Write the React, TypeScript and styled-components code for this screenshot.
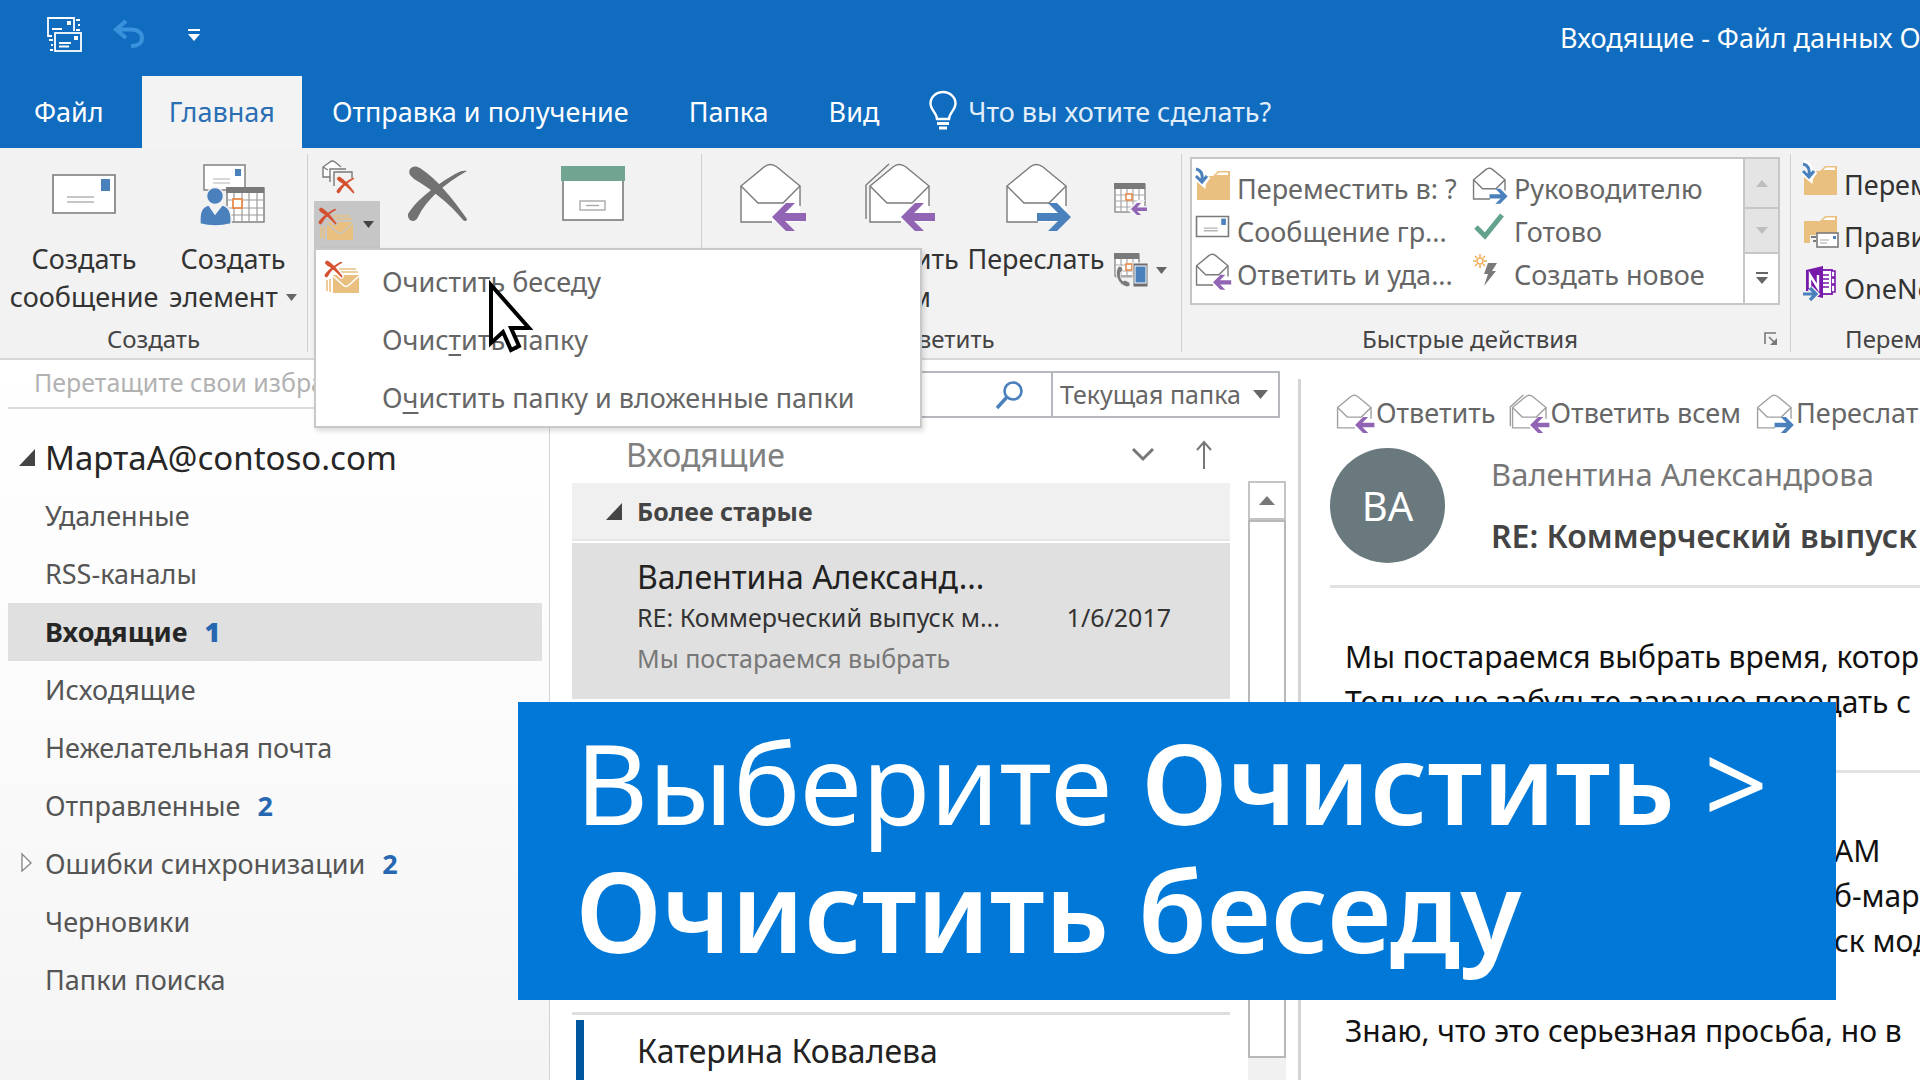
import React from 'react';
import styled, { createGlobalStyle, css } from 'styled-components';

const GlobalStyle = createGlobalStyle`
  * { box-sizing: border-box; }
  body { margin: 0; background: #fff; font-family: "Noto Sans", "Open Sans", sans-serif; font-size: 27px; color: #333; }
  button, input, select { font: inherit; color: inherit; margin: 0; padding: 0; border: 0; background: none; border-radius: 0; outline: none; }
  ul, h1, h2, h3, p { margin: 0; padding: 0; list-style: none; font-weight: 400; font-size: inherit; }
  svg { display: block; flex: none; overflow: visible; }
`;

const GREY = '#7a7a7a';
const BLUE = '#4a80bc';
const PURPLE = '#9164b4';
const SAND = '#e9c07f';
const RED = '#d4502f';

/* ---------- icons ---------- */

const Mail = ({ w = 64, h = 40 }: { w?: number; h?: number }) => (
  <svg width={w} height={h} viewBox="0 0 64 40" preserveAspectRatio="none" aria-hidden="true">
    <rect x="1" y="1" width="62" height="38" fill="#fff" stroke={GREY} strokeWidth="1.6" vectorEffect="non-scaling-stroke" />
    <rect x="49" y="5" width="9" height="12" fill={BLUE} />
    <path d="M15 23H42M15 28H42" stroke="#b4b4b4" strokeWidth="1.4" vectorEffect="non-scaling-stroke" />
  </svg>
);

type EnvelopeProps = { size?: number; arrow: 'left' | 'right'; double?: boolean; soft?: boolean };
const OpenEnvelope = ({ size = 60, arrow, double, soft }: EnvelopeProps) => {
  const line = { stroke: soft ? '#a0a0a0' : GREY, strokeWidth: 1.4, vectorEffect: 'non-scaling-stroke' as const };
  return (
    <svg width={size} height={size} viewBox="0 0 60 60" aria-hidden="true">
      {double && <path d="M-3 55V21L20 0" fill="none" {...line} />}
      <path d="M1 22V58H60V22L37 3Q30 -2 24 3Z" fill="#fff" stroke="none" />
      <path d="M32 58H1V22L24 3Q30 -2 37 3L60 22V42" fill="none" {...line} />
      <path d="M1 22L18 39H43L60 22" fill="none" {...line} />
      {arrow === 'left' ? (
        <path d="M32 53L46 39H55L45 49H66V57H45L55 67H46Z" fill={PURPLE} />
      ) : (
        <path d="M65 53L51 39H42L52 49H31V57H52L42 67H51Z" fill={BLUE} />
      )}
    </svg>
  );
};

const CROSS_A = 'M2 9C-1 2 6 -2 12 2C30 14 44 32 59 53C59 55 57 56 55 54C42 38 22 22 6 13Z';
const CROSS_B = 'M59 5C56 4 52 5 47 8C30 18 9 33 0 48C-1 55 7 58 10 51C18 34 36 18 59 5Z';
const Cross = () => (
  <svg width="59" height="56" viewBox="0 0 59 56" aria-hidden="true">
    <path d={CROSS_A} fill="#727272" />
    <path d={CROSS_B} fill="#727272" />
  </svg>
);

const Archive = () => (
  <svg width="64" height="56" viewBox="0 0 64 56" aria-hidden="true">
    <rect x="2" y="10" width="60" height="44" fill="#fff" stroke={GREY} strokeWidth="1.6" />
    <rect width="64" height="15" fill="#71a592" />
    <rect x="19" y="35" width="25" height="9" fill="#fff" stroke="#a8a8a8" strokeWidth="1.4" />
    <path d="M25 39.500H38" stroke="#a8a8a8" strokeWidth="1.4" />
  </svg>
);

const NewItem = () => (
  <svg width="64" height="60" viewBox="0 0 64 60" aria-hidden="true">
    <rect x="3" y="1" width="41" height="25" fill="#fff" stroke={GREY} strokeWidth="1.4" />
    <rect x="34" y="5" width="6" height="7" fill={BLUE} />
    <path d="M12 15H29M12 19H29" stroke="#b4b4b4" strokeWidth="1.2" />
    <rect x="26" y="24" width="37" height="34" fill="#fff" stroke={GREY} strokeWidth="1.4" />
    <rect x="25" y="23" width="38" height="6" fill={GREY} />
    <path d="M33 29V58M41 29V58M48 29V58M56 29V58M26 36H63M26 44H63M26 51H63" stroke="#9a9a9a" strokeWidth="1.2" />
    <rect x="32" y="35" width="9" height="9" fill="#fff" stroke="#e88b4a" strokeWidth="1.800" />
    <path d="M-1 60C-2 46 2 42 8 41L14 50L21 41C28 42 31 48 30 60Q14 64 -1 60Z" fill={BLUE} stroke="#f2f2f2" strokeWidth="1.500" />
    <ellipse cx="14" cy="32" rx="8.500" ry="8.500" fill={BLUE} stroke="#f2f2f2" strokeWidth="1.500" />
  </svg>
);

const Ignore = () => (
  <svg width="34" height="34" viewBox="0 0 34 34" aria-hidden="true">
    <path d="M8 17H1V7L8 2Q10 0 13 2L19 7M1 7L6 10" fill="#fff" stroke={GREY} strokeWidth="1.4" />
    <path d="M8 22V9H24M12 26V12H30V18" fill="none" stroke={GREY} strokeWidth="1.400" />
    <g transform="translate(15 17) scale(.29)" fill={RED} stroke={RED} strokeWidth="3"><path d={CROSS_A} /><path d={CROSS_B} /></g>
  </svg>
);

const CleanUp = ({ back = '#fff' }: { back?: string }) => (
  <svg width="34" height="33" viewBox="0 0 34 33" aria-hidden="true">
    <path d="M2 19V30M5 18V31M14 8H31M14 11H33" stroke={SAND} strokeWidth="1.600" fill="none" />
    <rect x="8" y="14" width="26" height="18" fill={SAND} />
    <path d="M8 15L18 24Q21 27 24 24L34 15" fill="none" stroke={back} strokeWidth="1.600" />
    <g transform="scale(.29)" fill={back} stroke={back} strokeWidth="12"><path d={CROSS_A} /><path d={CROSS_B} /></g>
    <g transform="scale(.29)" fill={RED} stroke={RED} strokeWidth="3"><path d={CROSS_A} /><path d={CROSS_B} /></g>
  </svg>
);

const Grid = ({ y = 0, w = 30, h = 29 }: { y?: number; w?: number; h?: number }) => (
  <g>
    <rect x="1" y={y + 1} width={w} height={h - 1} fill="#fff" stroke={GREY} strokeWidth="1.2" />
    <rect x="0" y={y} width={w + 1} height="6" fill={GREY} />
    <path d={`M7 ${y + 6}V${y + h}M13 ${y + 6}V${y + h}M19 ${y + 6}V${y + h}M25 ${y + 6}V${y + h}M1 ${y + 12}H${w}M1 ${y + 18}H${w}M1 ${y + 24}H${w}`} stroke="#a8a8a8" strokeWidth="1.2" />
    <rect x="12" y={y + 11} width="6" height="6" fill="#fff" stroke="#e88b4a" strokeWidth="1.600" />
  </g>
);

const Meeting = () => (
  <svg width="34" height="34" viewBox="0 0 34 34" aria-hidden="true">
    <Grid />
    <path d="M15 27L24 18H29L23 24H34V29H23L29 35H24Z" fill="#f2f2f2" stroke="#f2f2f2" strokeWidth="2" />
    <path d="M17 26L23 20H27L23 24.500H33V28H23L27 32H23Z" fill={PURPLE} />
  </svg>
);

const More = () => (
  <svg width="34" height="34" viewBox="0 0 34 34" aria-hidden="true">
    <Grid w={24} h={23} />
    <path d="M5 13C0 18 2 31 13 34C16 34 17 31 15 29L11 27L9 28C6 25 6 22 7 19L9 18L8 14Z" fill={GREY} stroke="#f2f2f2" strokeWidth="1" />
    <rect x="19" y="10" width="15" height="24" fill="#6d6d6d" stroke="#f2f2f2" />
    <rect x="21" y="13" width="11" height="17" fill={BLUE} stroke="#fff" />
  </svg>
);

const MoveFolder = () => (
  <svg width="34" height="32" viewBox="0 0 34 32" aria-hidden="true">
    <path d="M1 8H17L22 3H34V32H1Z" fill={SAND} />
    <path d="M20 7L23 4.500H32V7Z" fill="#fff" />
    <path d="M0 -1C6 1 8 5 7 15L0 9M7 15L12 8" fill="none" stroke="#fff" strokeWidth="6" />
    <path d="M0 1C5 2 7 6 6 13M0 8L6 14L11 8" fill="none" stroke={BLUE} strokeWidth="3" />
  </svg>
);

const Rules = () => (
  <svg width="34" height="32" viewBox="0 0 34 32" aria-hidden="true">
    <path d="M1 6H17L22 1H34V28H1Z" fill={SAND} />
    <path d="M20 5L23 2.500H32V5Z" fill="#fff" />
    <path d="M7 20H14V30H7Z" fill="#f2f2f2" />
    <path d="M8 22H13M10 26H13" stroke={GREY} strokeWidth="2" />
    <rect x="14" y="18" width="21" height="14" fill="#fff" stroke={GREY} strokeWidth="1.600" />
    <rect x="30" y="21" width="3" height="3" fill={BLUE} />
    <path d="M17 25H26M17 28H24" stroke="#a8a8a8" strokeWidth="1.2" />
  </svg>
);

const OneNote = () => (
  <svg width="34" height="34" viewBox="0 0 34 34" aria-hidden="true">
    <rect x="15" y="4" width="14" height="24" fill="#fff" stroke="#7719aa" strokeWidth="1.800" />
    <path d="M29 5H32V11H29M29 12H32V18H29M29 19H32V26H29" fill="#fff" stroke="#7719aa" strokeWidth="1.600" />
    <path d="M20 9H26M20 13H26M20 17H26M20 21H26" stroke="#7719aa" strokeWidth="1.600" />
    <path d="M3 4L20 0V32L3 28Z" fill="#7719aa" />
    <path d="M7 22V9L15 22V9" fill="none" stroke="#fff" strokeWidth="2.400" />
    <path d="M0 28H12M7 22L13 28L7 34" fill="none" stroke="#f2f2f2" strokeWidth="6" />
    <path d="M0 28H12M7 22L13 28L7 34" fill="none" stroke={BLUE} strokeWidth="3.200" />
  </svg>
);

const Check = () => (
  <svg width="34" height="30" viewBox="0 0 34 30" aria-hidden="true">
    <path d="M3 15L12 24L29 3" fill="none" stroke="#63a38d" strokeWidth="5" />
  </svg>
);

const NewStep = () => (
  <svg width="34" height="34" viewBox="0 0 34 34" aria-hidden="true">
    <circle cx="7" cy="8" r="3" fill="#fff" stroke="#efb05e" strokeWidth="1.600" />
    <path d="M7 1V4M7 12V15M0 8H3M11 8H14M2 3L4 5M10 11L12 13M12 3L10 5M4 11L2 13" stroke="#efb05e" strokeWidth="1.600" />
    <path d="M15 10H24L19 18H23L11 33L15 21H11Z" fill={GREY} />
  </svg>
);

const Bulb = () => (
  <svg width="28" height="40" viewBox="0 0 28 40" aria-hidden="true">
    <path d="M8 28C8 22 1.500 19 1.500 12.500A12.500 11.500 0 0 1 26.500 12.500C26.500 19 20 22 20 28Z" fill="none" stroke="#fff" strokeWidth="2.400" />
    <path d="M8 32.500H20M10 37H18" stroke="#fff" strokeWidth="3" />
  </svg>
);

const SendReceive = () => (
  <svg width="35" height="36" viewBox="0 0 35 36" aria-hidden="true">
    <g fill="none" stroke="#fff" strokeWidth="1.800">
      <path d="M5 19H1V1H27V14" />
      <rect x="8" y="16" width="26" height="18" />
      <path d="M5 12H15M12 26H24M12 29.500H22M29 3H33M31 8H33M29 13H33M2 23H6M4 28H6M3 33H6" />
    </g>
    <path d="M20 4H24V8H20ZM27 19H31V23H27Z" fill="#fff" />
  </svg>
);

const Undo = () => (
  <svg width="32" height="30" viewBox="0 0 32 30" aria-hidden="true">
    <path d="M13 1L3 9.500L13 18M3 9.500H18C26 9.500 29 14 29 18C29 23 25 26 18 26" fill="none" stroke="#3a92dc" strokeWidth="4" />
  </svg>
);

const Lens = () => (
  <svg width="27" height="28" viewBox="0 0 27 28" aria-hidden="true">
    <circle cx="17" cy="10" r="8.500" fill="none" stroke={BLUE} strokeWidth="2.600" />
    <path d="M11 16L1 27" stroke={BLUE} strokeWidth="3.400" />
  </svg>
);

const Tri = ({ w = 12, h = 7, up, color = '#666' }: { w?: number; h?: number; up?: boolean; color?: string }) => (
  <svg width={w} height={h} viewBox="0 0 12 7" preserveAspectRatio="none" aria-hidden="true">
    <path d={up ? 'M0 7L6 0L12 7Z' : 'M0 0H12L6 7Z'} fill={color} />
  </svg>
);

const BarTri = ({ color }: { color: string }) => (
  <svg width="14" height="13" viewBox="0 0 14 13" aria-hidden="true">
    <path d="M1 1H13" stroke={color} strokeWidth="2" />
    <path d="M1 5H13L7 12Z" fill={color} />
  </svg>
);

const Corner = () => (
  <svg width="16" height="17" viewBox="0 0 16 17" aria-hidden="true"><path d="M16 0V17H0Z" fill="#444" /></svg>
);

const Hollow = () => (
  <svg width="14" height="20" viewBox="-2 0 14 20" aria-hidden="true"><path d="M1 1L10 10L1 18Z" fill="#fff" stroke="#8a8a8a" strokeWidth="1.4" /></svg>
);

/* ---------- frame ---------- */

const Window = styled.div`position: relative; height: 100vh; overflow: hidden; display: flex; flex-direction: column; white-space: nowrap;`;
const Blue = styled.header`background: #0f6cbf; color: #fff;`;
const TitleBar = styled.div`display: flex; align-items: center; height: 76px; padding: 0 0 6px 47px;`;
const QuickButton = styled.button<{ $gap: number }>`margin-right: ${p => p.$gap}px;`;
const WindowTitle = styled.h1`margin-left: auto; width: 360px; overflow: hidden; padding-top: 4px;`;
const Tabs = styled.nav`display: flex; height: 72px; align-items: stretch;`;
const Tab = styled.button<{ $active?: boolean; $first?: boolean }>`
  padding: 0 30px 2px;
  ${p => p.$first && css`padding-left: 34px; margin-right: 8px;`}
  ${p => p.$active && css`padding-left: 27px; padding-right: 27px; background: #f3f3f3; color: #2a6fb3;`}
`;
const Tell = styled.label`display: flex; align-items: center; gap: 11px; margin-left: 20px; padding-bottom: 2px;`;
const TellInput = styled.input`width: 340px; &::placeholder { color: #e2effa; opacity: 1; }`;

/* ---------- ribbon ---------- */

const Ribbon = styled.div`
  display: flex; flex: none; height: 212px; background: #f2f2f2; border-bottom: 2px solid #d8d8d8;
`;
const Group = styled.section<{ $w: number }>`
  flex: none; width: ${p => p.$w}px; display: flex; flex-direction: column; justify-content: space-between;
`;
const Rule = styled.div`flex: none; width: 1px; margin: 6px 0; background: #cfcfcf;`;
const Parts = styled.div<{ $pad?: number }>`display: flex; height: 168px; padding-left: ${p => p.$pad ?? 6}px;`;
const GroupLabel = styled.h2`
  display: flex; justify-content: center; align-items: center; height: 37px; padding-bottom: 2px; font-size: 24px; color: #444;
`;
const Big = styled.button<{ $w: number }>`
  width: ${p => p.$w}px; display: flex; flex-direction: column; align-items: center; line-height: 38px;
`;
const BigIcon = styled.span`height: 92px; display: flex; align-items: center;`;
const Line = styled.span`display: flex; align-items: center; gap: 8px;`;
const SmallColumn = styled.div<{ $top: number }>`display: flex; flex-direction: column; width: 66px; padding-top: ${p => p.$top}px;`;
const Small = styled.button<{ $h: number; $pressed?: boolean }>`
  display: flex; align-items: center; gap: 8px; width: 100%; height: ${p => p.$h}px; padding-left: 8px;
  ${p => p.$pressed && css`background: #c6c6c6; padding-left: 5px; gap: 10px;`}
`;
const Anchor = styled.div`position: relative;`;
const Menu = styled.ul`
  position: absolute; z-index: 5; top: 100%; left: 0; width: 608px; padding-top: 2px;
  background: #fff; border: 2px solid #c8c8c8; box-shadow: 2px 3px 5px rgba(0, 0, 0, .14);
`;
const MenuItem = styled.button`
  display: flex; align-items: center; width: 100%; height: 58px; padding-left: 9px; color: #666; text-align: left;
  u { text-decoration-thickness: 2px; text-underline-offset: 4px; }
`;
const MenuIcon = styled.span`width: 57px; padding-bottom: 8px;`;

const Gallery = styled.div`display: flex; width: 590px; height: 148px; margin-top: 9px; border: 2px solid #c6c6c6; background: #fff;`;
const Steps = styled.div`
  flex: 1; display: grid; grid-template-columns: 277px 1fr; grid-auto-rows: 43px; padding: 8px 0 0 4px; color: #666;
`;
const Step = styled.button`display: flex; align-items: center; gap: 7px; text-align: left;`;
const StepIcon = styled.span`width: 34px; padding-bottom: 10px;`;
const Scroller = styled.div`width: 35px; display: grid; grid-template-rows: 50px 45px 1fr; border-left: 2px solid #c6c6c6;`;
const ScrollStep = styled.button<{ $off?: boolean }>`
  display: flex; align-items: center; justify-content: center;
  ${p => p.$off && css`background: #e4e4e4; border-bottom: 2px solid #c6c6c6;`}
`;
const LabelText = styled.span`flex: 1; text-align: center;`;
const Launcher = styled.button`width: 26px; margin-right: 6px; display: flex; justify-content: center;`;
const MoveList = styled.div`padding: 10px 0 0 12px; display: grid; grid-auto-rows: 52px;`;

/* ---------- folders ---------- */

const Body = styled.main`flex: 1; display: flex; min-height: 0;`;
const Folders = styled.nav`
  flex: none; width: 550px; padding: 0 7px 0 8px; border-right: 1px solid #d4d4d4;
  background: linear-gradient(#fff, #fbfbfb 50%, #f4f4f4);
`;
const Favorites = styled.p`height: 49px; line-height: 44px; padding-left: 26px; margin-bottom: 20px; color: #b2b2b2; font-size: 25px; border-bottom: 2px solid #dcdcdc;`;
const Account = styled.h2`display: flex; align-items: center; height: 58px; padding-bottom: 2px; font-size: 33px; color: #262626;`;
const Marker = styled.span`width: 37px; padding-left: 11px;`;
const Folder = styled.button<{ $on?: boolean }>`
  display: flex; align-items: center; width: 100%; height: 58px; padding-bottom: 2px; color: #555; text-align: left;
  ${p => p.$on && css`background: #e0e0e0; color: #262626; font-weight: 700;`}
`;
const Count = styled.b`margin-left: 17px; color: #2767b2;`;

/* ---------- message list ---------- */

const Messages = styled.section`flex: none; width: 748px; display: flex; flex-direction: column; padding: 11px 0 0 22px;`;
const SearchRow = styled.div`
  display: flex; flex: none; width: 708px; height: 47px; border: 2px solid #b5b8bd; font-size: 25px; color: #666;
`;
const SearchBox = styled.label`flex: 1; display: flex; align-items: center; padding-right: 28px;`;
const SearchInput = styled.input`flex: 1; min-width: 0; height: 100%; padding-left: 8px;`;
const Scope = styled.label`position: relative; display: flex; align-items: center; width: 227px; border-left: 2px solid #b5b8bd;`;
const ScopeSelect = styled.select`appearance: none; width: 100%; height: 100%; padding: 0 0 2px 7px;`;
const ScopeArrow = styled.span`position: absolute; right: 10px; pointer-events: none;`;
const ListHead = styled.div`display: flex; align-items: center; flex: none; width: 658px; height: 65px; padding: 8px 18px 0 54px; font-size: 32px; color: #808080;`;
const SortButton = styled.button<{ $gap?: boolean }>`margin-left: ${p => (p.$gap ? 42 : 0)}px;`;
const Push = styled.span`flex: 1;`;
const ListArea = styled.div`flex: 1; min-height: 0; display: flex; gap: 18px;`;
const List = styled.div`width: 658px;`;
const GroupHead = styled.h3`
  display: flex; align-items: center; gap: 15px; height: 58px; padding-left: 34px; background: #f0f0f0; border-bottom: 2px solid #e6e6e6;
  font-size: 25px; font-weight: 700; color: #444;
`;
const Item = styled.article`
  height: 158px; margin-bottom: 313px; padding: 13px 59px 0 65px; background: #e0e0e0; border-top: 2px solid #fff; line-height: 41px; font-size: 25px; color: #333;
`;
const Sender = styled.h3`font-size: 32px; color: #222;`;
const Spread = styled.p`display: flex; justify-content: space-between;`;
const Preview = styled.p`color: #777;`;
const Unread = styled.article`border-top: 3px solid #dedede; padding: 5px 0 0 4px;`;
const UnreadBody = styled.div`height: 120px; border-left: 8px solid #00569f; padding: 10px 0 0 53px; line-height: 41px;`;
const Scrollbar = styled.div`width: 38px; background: #f1f1f1; display: flex; flex-direction: column; margin-top: -2px;`;
const ScrollUp = styled.button`display: flex; align-items: center; justify-content: center; height: 39px; background: #fff; border: 2px solid #c4c4c4;`;
const Thumb = styled.div`height: 538px; background: #fff; border: 2px solid #b8b8b8;`;

/* ---------- reading pane ---------- */

const Reader = styled.section`flex: 1; min-width: 0; overflow: hidden; margin-top: 19px; padding-left: 29px; border-left: 3px solid #d4d4d4;`;
const Actions = styled.div`display: flex; gap: 16px; height: 69px; padding: 0 0 3px 7px; align-items: center; color: #666;`;
const Action = styled.button`display: flex; align-items: center; gap: 5px;`;
const Head = styled.div`display: flex; gap: 46px; height: 140px; border-bottom: 3px solid #e2e2e2;`;
const Avatar = styled.div`flex: none; width: 115px; height: 115px; border-radius: 50%; background: #69797e; color: #fff; font-size: 40px; display: flex; align-items: center; justify-content: center;`;
const From = styled.p`height: 62px; line-height: 52px; font-size: 31px; color: #777;`;
const Subject = styled.h2`line-height: 52px; font-size: 32px; font-weight: 600; color: #444;`;
const Text = styled.div<{ $gap: number; $line?: boolean; $in?: boolean }>`
  padding-top: ${p => p.$gap}px; padding-left: ${p => (p.$in ? 504 : 15)}px; font-size: 30px; line-height: 45px; color: #111;
  ${p => p.$line && css`height: 185px; border-bottom: 3px solid #e2e2e2;`}
`;

/* ---------- overlays ---------- */

const Caption = styled.aside`
  position: absolute; z-index: 8; left: 27%; top: 65%; width: 1318px; height: 298px; padding: 16px 0 0 57px;
  background: #0078d7; color: #fff; font-size: 112px; line-height: 128px;
  b { font-weight: 600; }
`;
const MousePointer = styled.div`position: absolute; z-index: 9; left: 488px; top: 280px; pointer-events: none;`;

const folders: { name: string; count?: number; on?: boolean; closed?: boolean }[] = [
  { name: 'Удаленные' },
  { name: 'RSS-каналы' },
  { name: 'Входящие', count: 1, on: true },
  { name: 'Исходящие' },
  { name: 'Нежелательная почта' },
  { name: 'Отправленные', count: 2 },
  { name: 'Ошибки синхронизации', count: 2, closed: true },
  { name: 'Черновики' },
  { name: 'Папки поиска' },
];

const steps = [
  { icon: <MoveFolder />, text: 'Переместить в: ?' },
  { icon: <OpenEnvelope size={32} arrow="right" />, text: 'Руководителю' },
  { icon: <Mail w={33} h={21} />, text: 'Сообщение гр...' },
  { icon: <Check />, text: 'Готово' },
  { icon: <OpenEnvelope size={32} arrow="left" />, text: 'Ответить и уда...' },
  { icon: <NewStep />, text: 'Создать новое' },
];

type BigButtonProps = { w: number; icon: React.ReactNode; lines?: string[]; label?: string; drop?: boolean };
const BigButton = ({ w, icon, lines = [], label, drop }: BigButtonProps) => (
  <Big type="button" $w={w} aria-label={label}>
    <BigIcon>{icon}</BigIcon>
    {lines.map((l, i) => (
      <Line key={l}>{l}{drop && i === lines.length - 1 && <Tri w={11} />}</Line>
    ))}
  </Big>
);

export default function App() {
  return (
    <Window>
      <GlobalStyle />
      <Blue>
        <TitleBar>
          <QuickButton type="button" $gap={31} aria-label="Отправить и получить"><SendReceive /></QuickButton>
          <QuickButton type="button" $gap={42} aria-label="Отменить"><Undo /></QuickButton>
          <QuickButton type="button" $gap={0} aria-label="Настроить панель"><BarTri color="#fff" /></QuickButton>
          <WindowTitle>Входящие - Файл данных Outlook</WindowTitle>
        </TitleBar>
        <Tabs>
          <Tab type="button" $first>Файл</Tab>
          <Tab type="button" $active>Главная</Tab>
          <Tab type="button">Отправка и получение</Tab>
          <Tab type="button">Папка</Tab>
          <Tab type="button">Вид</Tab>
          <Tell><Bulb /><TellInput type="text" placeholder="Что вы хотите сделать?" aria-label="Что вы хотите сделать?" /></Tell>
        </Tabs>
      </Blue>

      <Ribbon>
        <Group $w={307}>
          <Parts $pad={4}>
            <BigButton w={160} icon={<Mail />} lines={['Создать', 'сообщение']} />
            <BigButton w={138} icon={<NewItem />} lines={['Создать', 'элемент']} drop />
          </Parts>
          <GroupLabel>Создать</GroupLabel>
        </Group>
        <Rule />
        <Group $w={393}>
          <Parts>
            <SmallColumn $top={4}>
              <Small type="button" $h={49} aria-label="Пропустить"><Ignore /></Small>
              <Anchor>
                <Small type="button" $h={47} $pressed aria-label="Очистить"><CleanUp back="#c6c6c6" /><Tri w={11} color="#444" /></Small>
                <Menu>
                  <li><MenuItem type="button"><MenuIcon><CleanUp /></MenuIcon>Очистить беседу</MenuItem></li>
                  <li><MenuItem type="button"><MenuIcon /><span>Очис<u>т</u>ить папку</span></MenuItem></li>
                  <li><MenuItem type="button"><MenuIcon /><span>О<u>ч</u>истить папку и вложенные папки</span></MenuItem></li>
                </Menu>
              </Anchor>
            </SmallColumn>
            <BigButton w={114} icon={<Cross />} label="Удалить" />
            <BigButton w={198} icon={<Archive />} label="Архивировать" />
          </Parts>
        </Group>
        <Rule />
        <Group $w={479}>
          <Parts>
            <BigButton w={124} icon={<OpenEnvelope arrow="left" />} label="Ответить" />
            <BigButton w={134} icon={<OpenEnvelope arrow="left" double />} lines={['Ответить', 'всем']} />
            <BigButton w={140} icon={<OpenEnvelope arrow="right" />} lines={['Переслать']} />
            <SmallColumn $top={17}>
              <Small type="button" $h={70} aria-label="Собрание"><Meeting /></Small>
              <Small type="button" $h={70} aria-label="Дополнительно"><More /><Tri w={11} /></Small>
            </SmallColumn>
          </Parts>
          <GroupLabel>Ответить</GroupLabel>
        </Group>
        <Rule />
        <Group $w={608}>
          <Parts $pad={8}>
            <Gallery>
              <Steps>
                {steps.map(s => <Step type="button" key={s.text}><StepIcon>{s.icon}</StepIcon>{s.text}</Step>)}
              </Steps>
              <Scroller>
                <ScrollStep type="button" $off aria-label="Вверх"><Tri up color="#bdbdbd" /></ScrollStep>
                <ScrollStep type="button" $off aria-label="Вниз"><Tri color="#bdbdbd" /></ScrollStep>
                <ScrollStep type="button" aria-label="Все действия"><BarTri color="#666" /></ScrollStep>
              </Scroller>
            </Gallery>
          </Parts>
          <GroupLabel>
            <LabelText>Быстрые действия</LabelText>
            <Launcher type="button" aria-label="Настройка действий">
              <svg width="14" height="14" viewBox="0 0 14 14" aria-hidden="true">
                <path d="M1 12V1H12M5 5L11 11" fill="none" stroke="#777" strokeWidth="1.600" />
                <path d="M13 6V13H6Z" fill="#777" />
              </svg>
            </Launcher>
          </GroupLabel>
        </Group>
        <Rule />
        <Group $w={276}>
          <MoveList>
            <Step type="button"><StepIcon><MoveFolder /></StepIcon>Переместить</Step>
            <Step type="button"><StepIcon><Rules /></StepIcon>Правила</Step>
            <Step type="button"><StepIcon><OneNote /></StepIcon>OneNote</Step>
          </MoveList>
          <GroupLabel>Перемещение</GroupLabel>
        </Group>
      </Ribbon>

      <Body>
        <Folders>
          <Favorites>Перетащите свои избранные</Favorites>
          <Account><Marker><Corner /></Marker>МартаА@contoso.com</Account>
          {folders.map(f => (
            <Folder type="button" key={f.name} $on={f.on}>
              <Marker>{f.closed && <Hollow />}</Marker>{f.name}{f.count && <Count>{f.count}</Count>}
            </Folder>
          ))}
        </Folders>

        <Messages>
          <SearchRow>
            <SearchBox><SearchInput type="text" aria-label="Поиск" /><Lens /></SearchBox>
            <Scope>
              <ScopeSelect aria-label="Область поиска" defaultValue="current"><option value="current">Текущая папка</option></ScopeSelect>
              <ScopeArrow><Tri w={15} h={9} /></ScopeArrow>
            </Scope>
          </SearchRow>
          <ListHead>
            Входящие<Push />
            <SortButton type="button" aria-label="Упорядочить">
              <svg width="22" height="13" viewBox="0 0 22 13" aria-hidden="true"><path d="M1 1L11 11L21 1" fill="none" stroke="#777" strokeWidth="3" /></svg>
            </SortButton>
            <SortButton type="button" $gap aria-label="Порядок сортировки">
              <svg width="16" height="28" viewBox="0 0 16 28" aria-hidden="true"><path d="M8 28V2M1 9L8 1L15 9" fill="none" stroke="#777" strokeWidth="2" /></svg>
            </SortButton>
          </ListHead>
          <ListArea>
            <List>
              <GroupHead><Corner />Более старые</GroupHead>
              <Item>
                <Sender>Валентина Александ...</Sender>
                <Spread><span>RE: Коммерческий выпуск м...</span><time>1/6/2017</time></Spread>
                <Preview>Мы постараемся выбрать</Preview>
              </Item>
              <Unread><UnreadBody><Sender>Катерина Ковалева</Sender></UnreadBody></Unread>
            </List>
            <Scrollbar>
              <ScrollUp type="button" aria-label="Прокрутить вверх"><Tri up w={16} h={9} color="#777" /></ScrollUp>
              <Thumb />
            </Scrollbar>
          </ListArea>
        </Messages>

        <Reader>
          <Actions>
            <Action type="button"><OpenEnvelope size={34} arrow="left" soft />Ответить</Action>
            <Action type="button"><OpenEnvelope size={34} arrow="left" double soft />Ответить всем</Action>
            <Action type="button"><OpenEnvelope size={34} arrow="right" soft />Переслать</Action>
          </Actions>
          <Head>
            <Avatar>ВА</Avatar>
            <div>
              <From>Валентина Александрова</From>
              <Subject>RE: Коммерческий выпуск</Subject>
            </div>
          </Head>
          <Text $gap={46} $line>
            <p>Мы постараемся выбрать время, которое</p>
            <p>Только не забудьте заранее передать с</p>
          </Text>
          <Text $gap={55} $in>
            <p>AM</p>
            <p>б-мар</p>
            <p>ск мод</p>
          </Text>
          <Text $gap={45}><p>Знаю, что это серьезная просьба, но в</p></Text>
        </Reader>
      </Body>

      <Caption>
        <p>Выберите <b>Очистить</b> &gt;</p>
        <p><b>Очистить беседу</b></p>
      </Caption>
      <MousePointer>
        <svg width="46" height="74" viewBox="0 0 46 74" aria-hidden="true">
          <path d="M3 5V63L15 52L23 70L31 66L23 48H41Z" fill="#fff" stroke="#000" strokeWidth="4" />
        </svg>
      </MousePointer>
    </Window>
  );
}
